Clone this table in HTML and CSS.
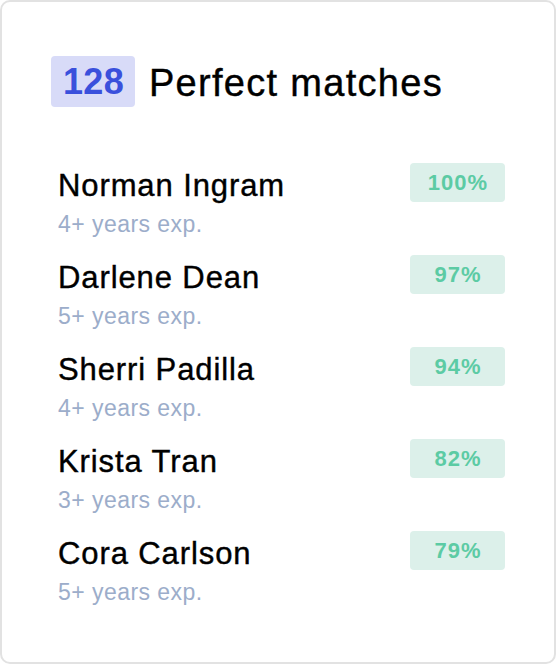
FILE: index.html
```html
<!DOCTYPE html>
<html>
<head>
<meta charset="utf-8">
<link rel="stylesheet" href="styles.css">
</head>
<body>
<div class="card">
  <div class="header">
    <span class="count">128</span>
    <span class="title">Perfect matches</span>
  </div>
  <ul class="list">
    <li class="row">
      <div class="info"><div class="name">Norman Ingram</div><div class="exp">4+ years exp.</div></div>
      <span class="pct">100%</span>
    </li>
    <li class="row">
      <div class="info"><div class="name">Darlene Dean</div><div class="exp">5+ years exp.</div></div>
      <span class="pct">97%</span>
    </li>
    <li class="row">
      <div class="info"><div class="name">Sherri Padilla</div><div class="exp">4+ years exp.</div></div>
      <span class="pct">94%</span>
    </li>
    <li class="row">
      <div class="info"><div class="name">Krista Tran</div><div class="exp">3+ years exp.</div></div>
      <span class="pct">82%</span>
    </li>
    <li class="row">
      <div class="info"><div class="name">Cora Carlson</div><div class="exp">5+ years exp.</div></div>
      <span class="pct">79%</span>
    </li>
  </ul>
</div>
</body>
</html>
```
FILE: styles.css
```css
* { box-sizing: border-box; }
html, body { margin: 0; padding: 0; background: #ffffff; }
body { font-family: "Liberation Sans", Arial, sans-serif; }
.card {
  width: 556px;
  height: 664px;
  border: 2px solid #e2e2e2;
  border-radius: 10px;
  background: #fff;
  padding: 54px 49px 0 49px;
}
.header {
  display: flex;
  align-items: center;
  height: 51px;
}
.count {
  display: flex;
  align-items: center;
  height: 51px;
  padding: 0 11px 0 12px;
  background: #d8dbf8;
  color: #3a50dc;
  font-weight: bold;
  font-size: 36px;
  letter-spacing: 0.3px;
  border-radius: 4px;
}
.title {
  margin-left: 14px;
  font-size: 38px;
  letter-spacing: 1.3px;
  -webkit-text-stroke: 0.4px #000;
  color: #000;
  position: relative;
  top: 2px;
}
.list {
  list-style: none;
  margin: 56px 0 0 0;
  padding: 0 0 0 7px;
}
.row {
  display: flex;
  justify-content: space-between;
  align-items: flex-start;
  height: 92px;
}
.name {
  font-size: 31px;
  line-height: 36px;
  letter-spacing: 0.9px;
  -webkit-text-stroke: 0.4px #000;
  color: #000;
  margin-top: 5px;
}
.exp {
  font-size: 23px;
  line-height: 28px;
  letter-spacing: 0.45px;
  color: #9cadca;
  margin-top: 6px;
}
.pct {
  width: 95px;
  height: 39px;
  background: #dcf0ea;
  color: #5ccba4;
  font-weight: bold;
  font-size: 22px;
  letter-spacing: 1px;
  padding-left: 1px;
  border-radius: 4px;
  display: flex;
  align-items: center;
  justify-content: center;
}
```
